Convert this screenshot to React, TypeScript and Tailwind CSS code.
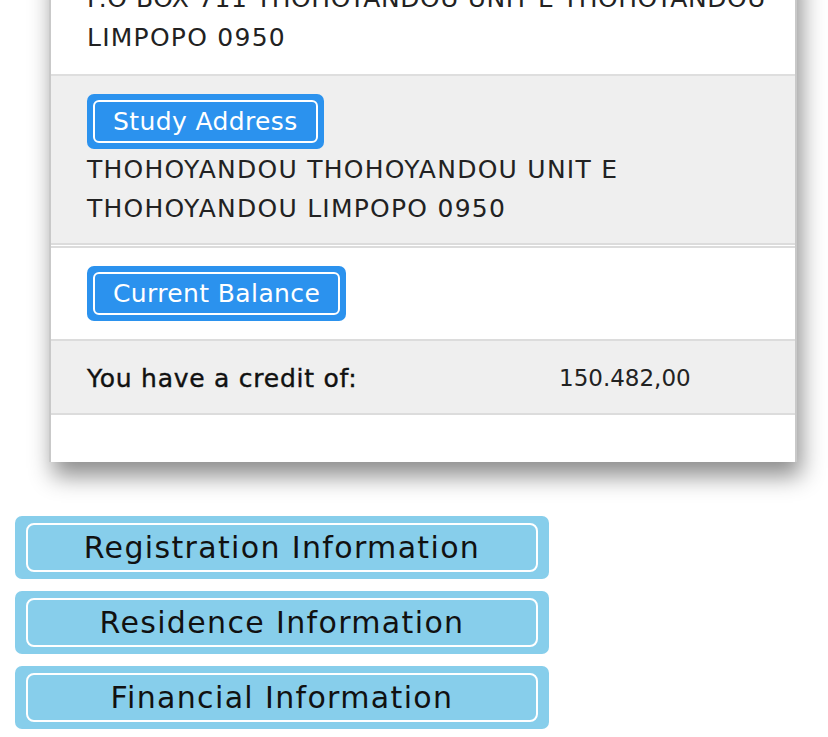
import React from "react";

function Badge({ label }: { label: string }) {
  return (
    <div className="inline-flex rounded-[7px] bg-[#2b92ee] p-[6px]">
      <div className="flex h-[43px] items-center rounded-[6px] border-2 border-white px-[18px] text-[25px] leading-none tracking-[0.015em] text-white">
        {label}
      </div>
    </div>
  );
}

function NavButton({ label }: { label: string }) {
  return (
    <div className="h-[63px] rounded-[7px] bg-[#87ceeb] px-[11px] py-[7px]">
      <div className="flex h-full items-center justify-center rounded-[8px] border-2 border-white text-[30px] tracking-[0.045em] text-[#111]">
        {label}
      </div>
    </div>
  );
}

export default function App() {
  return (
    <div className="h-[737px] w-[828px] overflow-hidden bg-white font-['DejaVu_Sans',sans-serif]">
      <div className="-mt-[38px] ml-[49px] w-[748px] border-x-2 border-[#c9c9c9] bg-white shadow-[4px_14px_22px_rgba(0,0,0,0.45)]">
        <div className="border-b-2 border-[#dedede] px-[36px] py-[17px] text-[25px] leading-[39px] tracking-[0.05em] text-[#222]">
          <div className="whitespace-nowrap tracking-[0.022em]">P.O BOX 711 THOHOYANDOU UNIT E THOHOYANDOU</div>
          <div className="whitespace-nowrap">LIMPOPO 0950</div>
        </div>
        <div className="bg-[#efefef] px-[36px] pb-[15px] pt-[18px] text-[25px] leading-[39px] tracking-[0.05em] text-[#222]">
          <Badge label="Study Address" />
          <div className="mt-[1px] whitespace-nowrap">THOHOYANDOU THOHOYANDOU UNIT E</div>
          <div className="whitespace-nowrap">THOHOYANDOU LIMPOPO 0950</div>
        </div>
        <div className="h-[2px] bg-[#dcdcdc]" />
        <div className="h-[1px] bg-white" />
        <div className="border-t-2 border-[#dcdcdc] px-[36px] pb-[18px] pt-[18px]">
          <Badge label="Current Balance" />
        </div>
        <div className="grid h-[76px] grid-cols-[472px_1fr] items-center border-y-2 border-[#dcdcdc] bg-[#efefef] px-[36px] pt-[3px] text-[25px] tracking-[0.03em] text-[#111]">
          <div className="whitespace-nowrap [-webkit-text-stroke:0.4px_#111]">You have a credit of:</div>
          <div className="whitespace-nowrap text-[23px] tracking-normal text-[#222]">150.482,00</div>
        </div>
        <div className="h-[47px]" />
      </div>
      <div className="ml-[15px] mt-[54px] flex w-[534px] flex-col gap-[12px]">
        <NavButton label="Registration Information" />
        <NavButton label="Residence Information" />
        <NavButton label="Financial Information" />
      </div>
    </div>
  );
}
